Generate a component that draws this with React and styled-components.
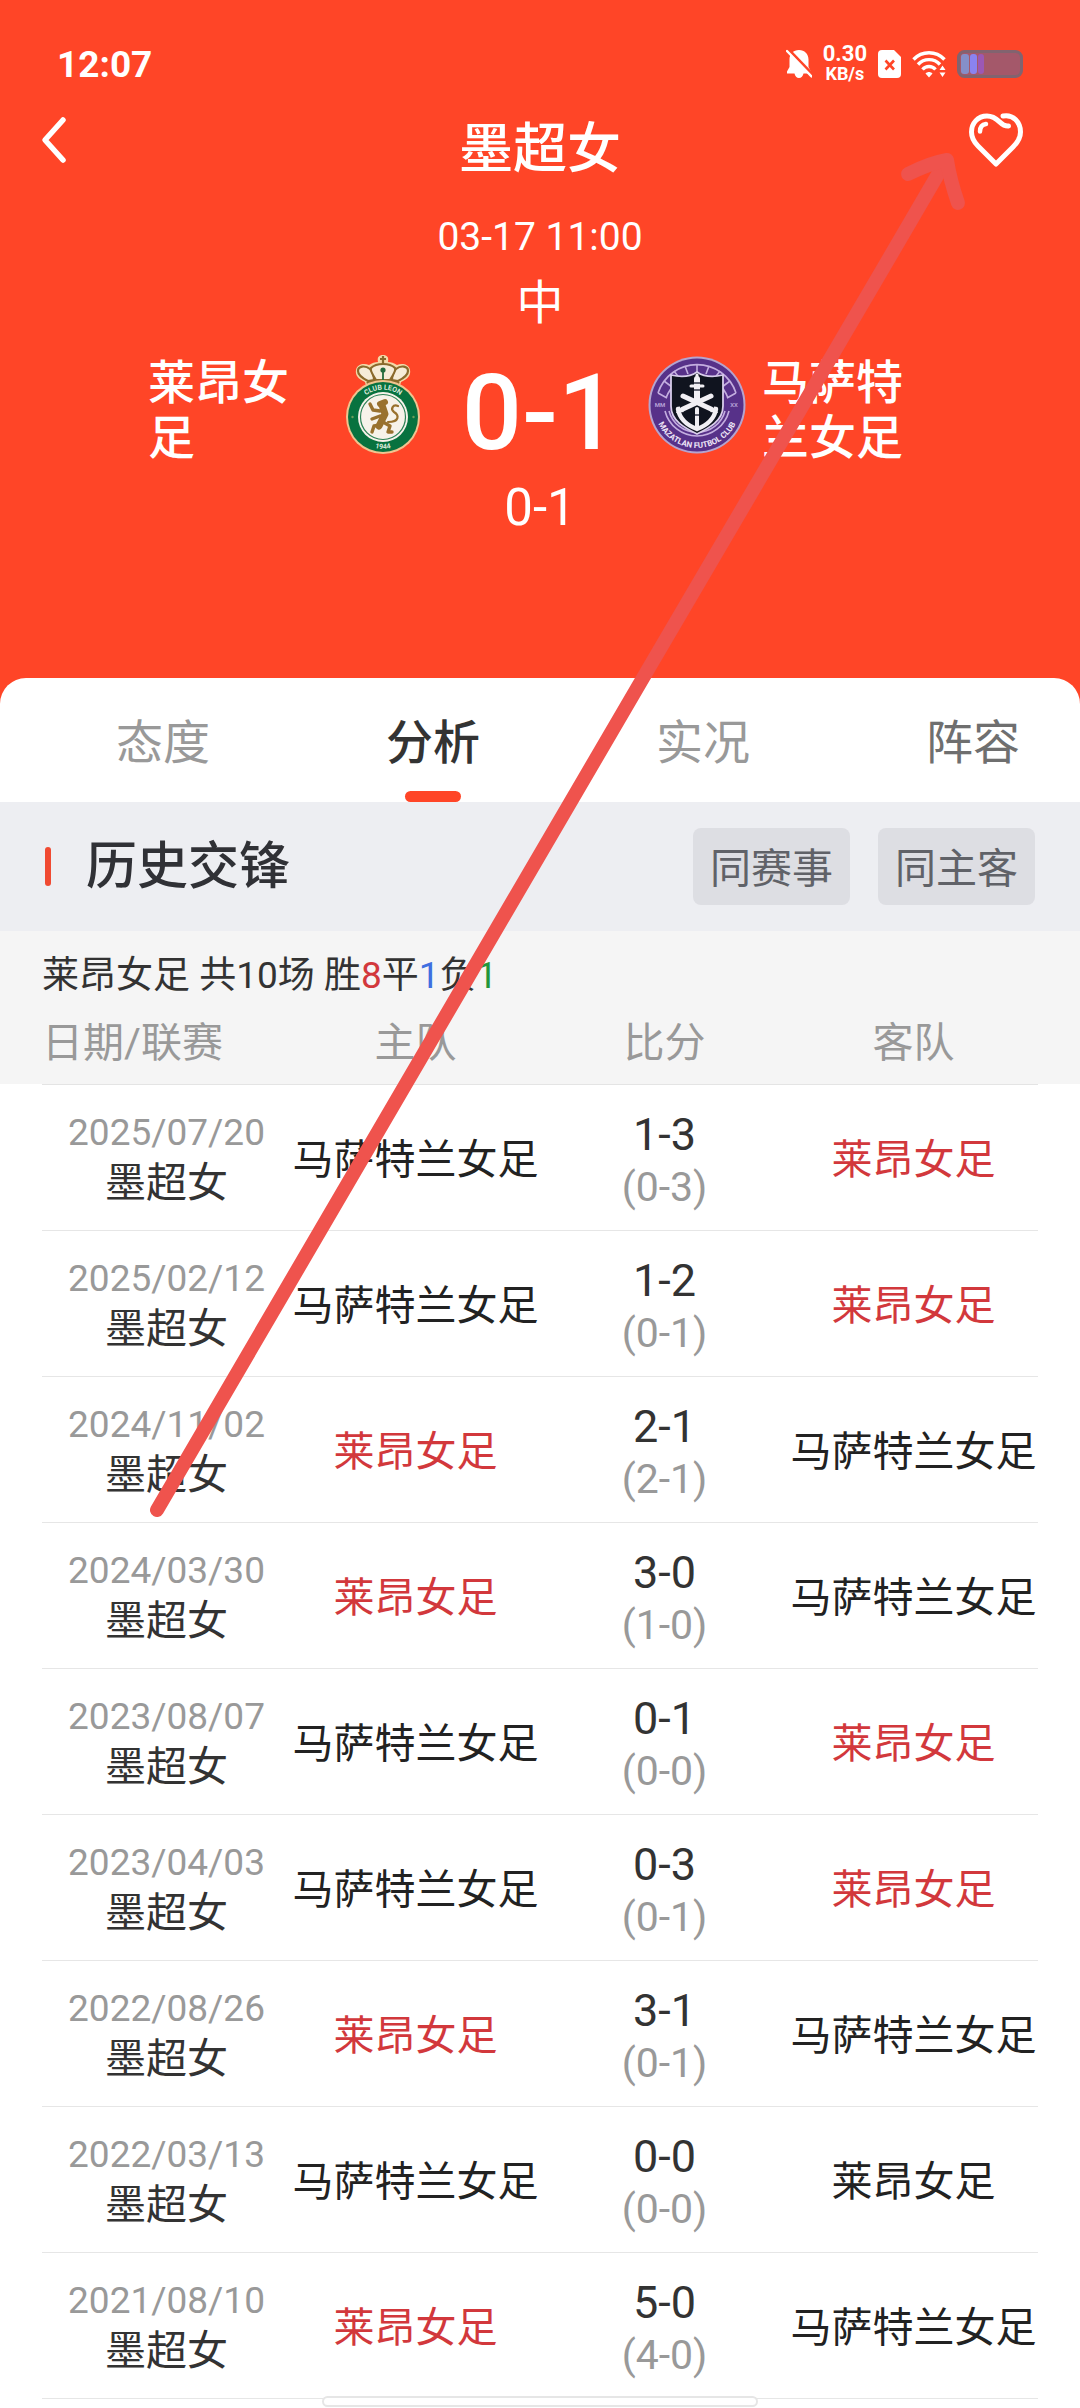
import React, { useState } from "react";
import styled, { createGlobalStyle } from "styled-components";

const GlobalStyle = createGlobalStyle`
  * { box-sizing: border-box; }
  body {
    margin: 0;
    background: #fff;
    font-family: Roboto, "Noto Sans CJK SC", sans-serif;
    color: #222;
  }
  button { font: inherit; border: 0; background: none; padding: 0; cursor: pointer; }
`;

const Page = styled.div`
  position: relative;
  min-height: 100vh;
  background: #fff;
  overflow: hidden;
`;

const Hero = styled.header`
  background: #ff4527;
  color: #fff;
  padding: 41px 57px 168px;
`;

const StatusBar = styled.div`
  display: flex;
  justify-content: space-between;
  align-items: center;
  height: 46px;
`;

const Clock = styled.time`
  font-size: 37px;
  font-weight: 700;
`;

const StatusIcons = styled.div`
  display: flex;
  align-items: center;
  gap: 11px;
`;

const Speed = styled.div`
  display: flex;
  flex-direction: column;
  align-items: center;
  font-weight: 700;
  font-size: 22px;
  line-height: 20px;
`;

const SpeedUnit = styled.span`
  font-size: 18px;
`;

const Nav = styled.nav`
  display: grid;
  grid-template-columns: 1fr auto 1fr;
  align-items: start;
  margin-top: 26px;
`;

const NavButton = styled.button`
  display: flex;
  align-items: center;
  height: 54px;
  color: #fff;
  justify-self: ${(p) => (p.$end ? "end" : "start")};
  margin-left: ${(p) => (p.$end ? "0" : "-16px")};
`;

const Title = styled.h1`
  margin: 0;
  font-size: 54px;
  font-weight: 500;
  line-height: 74px;
`;

const MatchInfo = styled.div`
  display: flex;
  flex-direction: column;
  align-items: center;
  gap: 10px;
  margin-top: 22px;
  font-size: 39px;
  line-height: 56px;
`;

const Venue = styled.span`
  font-size: 47px;
`;

const Versus = styled.div`
  display: grid;
  grid-template-columns: 1fr 98px 216px 98px 1fr;
  align-items: start;
  margin-top: 24px;
`;

const TeamName = styled.div`
  width: 186px;
  padding-left: ${(p) => (p.$away ? "16px" : "0")};
  justify-self: ${(p) => (p.$away ? "start" : "end")};
  font-size: 47px;
  font-weight: 500;
  line-height: 55px;
`;

const FinalScore = styled.div`
  text-align: center;
  font-size: 106px;
  font-weight: 500;
  line-height: 116px;
`;

const HalfScore = styled.div`
  margin-top: 9px;
  text-align: center;
  font-size: 51px;
  line-height: 56px;
`;

const Panel = styled.main`
  position: relative;
  margin-top: -26px;
  border-radius: 26px 26px 0 0;
  background: #fff;
  overflow: hidden;
`;

const Tabs = styled.div`
  display: flex;
  height: 124px;
  padding-left: 28px;
`;

const Tab = styled.button`
  position: relative;
  flex: 0 0 25vw;
  padding-bottom: 4px;
  font-size: 47px;
  font-weight: ${(p) => (p.$active ? 500 : 400)};
  color: ${(p) => (p.$active ? "#333" : p.$strong ? "#6f6f6f" : "#999")};

  &::after {
    content: "";
    position: absolute;
    left: 50%;
    bottom: 0;
    width: 56px;
    height: 11px;
    margin-left: -28px;
    border-radius: 6px;
    background: ${(p) => (p.$active ? "#ff4527" : "transparent")};
  }
`;

const SectionHead = styled.div`
  display: flex;
  align-items: center;
  height: 129px;
  padding: 0 45px;
  background: #edeef2;
`;

const SectionTitle = styled.h2`
  display: flex;
  align-items: center;
  gap: 35px;
  margin: 0 auto 0 0;
  font-size: 51px;
  font-weight: 500;
  line-height: 77px;
  color: #303136;

  &::before {
    content: "";
    width: 6px;
    height: 39px;
    border-radius: 3px;
    background: #f04a32;
  }
`;

const Filters = styled.div`
  display: flex;
  gap: 28px;
`;

const FilterButton = styled.button`
  width: 157px;
  height: 77px;
  padding-bottom: 3px;
  border-radius: 8px;
  background: ${(p) => (p.$on ? "#cfd1d8" : "#dddee3")};
  color: #606268;
  font-size: 41px;
`;

const Summary = styled.p`
  margin: 0;
  padding: 20px 42px 0;
  background: #f5f5f5;
  color: #333;
  font-size: 37px;
  line-height: 50px;
`;

const Count = styled.span`
  color: ${(p) => p.$color};
`;

const Records = styled.div`
  padding: 0 42px 9px;
  background: linear-gradient(#f5f5f5 83px, #fff 83px);
`;

const Table = styled.table`
  width: 100%;
  table-layout: fixed;
  border-collapse: separate;
  border-spacing: 0;
  font-size: 41px;
  white-space: nowrap;
`;

const HeadCell = styled.th`
  height: 84px;
  padding: 0 0 8px;
  border-bottom: 1px solid #e4e4e4;
  font-weight: 400;
  color: #999;
  text-align: ${(p) => (p.$left ? "left" : "center")};
`;

const Cell = styled.td`
  height: 146px;
  padding: ${(p) => (p.$score ? "6px 0 0" : p.$team ? "0 0 4px" : "0")};
  border-bottom: 1px solid #e6e6e6;
  text-align: center;
  color: ${(p) => (p.$mark ? "#d2383c" : "#222")};
`;

const PlayedOn = styled.div`
  font-size: 37px;
  line-height: 51px;
  color: #999;
`;

const League = styled.div`
  line-height: 51px;
  color: #333;
`;

const Full = styled.div`
  font-size: 45px;
  line-height: 53px;
  color: #333;
`;

const Half = styled.div`
  line-height: 53px;
  color: #999;
`;

const Pointer = styled.svg`
  position: absolute;
  top: 0;
  left: 0;
  width: 100%;
  pointer-events: none;
`;

const HomeBar = styled.div`
  position: absolute;
  left: 0;
  right: 0;
  bottom: 1px;
  width: 436px;
  height: 11px;
  margin: 0 auto;
  border: 2px solid #e6e6e6;
  border-radius: 6px;
  background: #fff;
`;

const BellOff = () => (
  <svg width="26" height="30" viewBox="0 0 26 30" aria-hidden="true">
    <path
      fill="#fff"
      d="M13 1c5.600 0 9.500 4 9.500 9.500v7.500l2.500 4.500v2h-7.500c-.5 2.600-2.200 4.500-4.500 4.500s-4-1.900-4.500-4.500H1v-2l2.500-4.500v-7.500C3.500 5 7.400 1 13 1z"
    />
    <path d="M2 0 L26 25" stroke="#ff4527" strokeWidth="3" />
    <path d="M1 2 L25.500 27.500" stroke="#fff" strokeWidth="2.400" strokeLinecap="round" />
  </svg>
);

const SimOff = () => (
  <svg width="23" height="28" viewBox="0 0 23 28" aria-hidden="true">
    <path fill="#fff" d="M4 0h12l7 7v17a4 4 0 0 1-4 4H4a4 4 0 0 1-4-4V4a4 4 0 0 1 4-4z" />
    <path d="M7.500 10.500l8.500 9M16 10.500l-8.500 9" stroke="#ff4527" strokeWidth="2.600" />
  </svg>
);

const Wifi = () => (
  <svg width="34" height="28" viewBox="0 0 34 28" aria-hidden="true">
    <g fill="none" stroke="#fff" strokeWidth="3.400">
      <path d="M1.500 9.500C10 .5 24 .5 32.500 9.500" />
      <path d="M6 14.500c6-6.500 16-6.500 22 0" />
      <path d="M10.500 19.500c3.500-4 9.500-4 13 0" />
    </g>
    <path fill="#fff" d="M13.500 23.500c2-2 5-2 7 0L17 27.500zM30.500 15.500l3 4.500h-6zM30.500 27l3-4.500h-6z" />
  </svg>
);

const Battery = () => (
  <svg width="66" height="28" viewBox="0 0 66 28" aria-hidden="true">
    <rect x="1.500" y="1.500" width="63" height="25" rx="6" fill="#a4586a" stroke="#82636f" strokeWidth="3" />
    <rect x="4" y="4" width="8" height="20" rx="3" fill="#858fc8" />
    <rect x="13" y="4" width="7" height="20" rx="3" fill="#8a83f0" />
    <rect x="21" y="4" width="6" height="20" rx="3" fill="#9c58b4" />
  </svg>
);

const BackIcon = () => (
  <svg width="28" height="48" viewBox="0 0 28 48" fill="none" stroke="#fff" strokeWidth="5.500" strokeLinecap="round" strokeLinejoin="round" aria-hidden="true">
    <path d="M22 4L4 24l18 20" />
  </svg>
);

const HeartIcon = () => (
  <svg width="54" height="54" viewBox="0 0 54 54" fill="none" stroke="#fff" strokeWidth="5" strokeLinecap="round" strokeLinejoin="round" aria-hidden="true">
    <path d="M34 3C44 1 51.500 9 51.500 19C51.500 26 48 30 44 34L27 51L9 33C4.500 28.500 2.500 25 2.500 19C2.500 10 9 3 18 3C30 3 31 14 39.500 13" />
    <path d="M11 18.500C11 14 13.500 11.500 17 11" strokeWidth="4.500" />
  </svg>
);

const LeonCrest = () => (
  <svg width="98" height="100" viewBox="0 0 98 100" role="img" aria-label="Club León">
    <defs>
      <path id="leon-top" d="M21.500 62a27.500 27.500 0 0 1 55 0" />
      <path id="leon-bottom" d="M17 62a32 32 0 0 0 64 0" />
    </defs>
    <path
      d="M33 34L31 27C24 24 21 20 22 15c1-6 8-7 13-5 3-2 6-3 9-3-1-5 1-7 5-7s6 2 5 7c3 0 6 1 9 3 5-2 12-1 13 5 1 5-2 9-9 12l-2 7z"
      fill="#f3d9a8"
    />
    <g fill="#f6ecd8" stroke="#8a6a2c" strokeWidth="2.200">
      <path d="M34 26c-6-3-10-6-10-10 0-5 7-6 12-2 3 3 4 8 4 11z" />
      <path d="M64 26c6-3 10-6 10-10 0-5-7-6-12-2-3 3-4 8-4 11z" />
      <path d="M42 25c-4-6-6-10-5-12 3-3 8-4 12-4s9 1 12 4c1 2-1 6-5 12z" />
    </g>
    <path d="M33 29q16-6 32 0" stroke="#8a6a2c" strokeWidth="4" fill="none" />
    <path d="M49 1v8M46 4h6" stroke="#8a6a2c" strokeWidth="2.200" />
    <circle cx="49" cy="15" r="2.600" fill="#246b3c" />
    <path d="M49 16v10" stroke="#246b3c" strokeWidth="1.800" />
    <circle cx="49" cy="62" r="37" fill="#f0c48f" />
    <circle cx="49" cy="62" r="35" fill="#08723f" />
    <circle cx="49" cy="62" r="25" fill="#f7f2ea" />
    <circle cx="49" cy="62" r="22.500" fill="none" stroke="#2b8054" strokeWidth="1.200" />
    <g fill="none" stroke="#99712e" strokeLinecap="round" strokeLinejoin="round">
      <path d="M48 50l3 9-6 12" strokeWidth="7" />
      <path d="M46 49l5-2" strokeWidth="6" />
      <path d="M46 56l-7-1-3-6M46 61l-8 3M46 70l-6 1-2 6M49 67l7 4-2 6h4" strokeWidth="3.400" />
      <path d="M54 67c12 0 11-7 6-10-4-3-1-8 4-6" strokeWidth="2.200" />
    </g>
    <circle cx="18.500" cy="62" r="1.200" fill="#6f9c5b" />
    <circle cx="79.500" cy="62" r="1.200" fill="#6f9c5b" />
    <text fill="#dceadd" fontSize="7" fontWeight="700" textAnchor="middle">
      <textPath href="#leon-top" startOffset="50%">CLUB LEON</textPath>
    </text>
    <text fill="#dceadd" fontSize="7" fontWeight="700" textAnchor="middle">
      <textPath href="#leon-bottom" startOffset="50%">1944</textPath>
    </text>
  </svg>
);

const MazatlanCrest = () => (
  <svg width="98" height="100" viewBox="0 0 98 100" role="img" aria-label="Mazatlán Futbol Club">
    <defs>
      <path id="maz-ring" d="M6 50a43 43 0 0 0 86 0" />
    </defs>
    <circle cx="49" cy="50" r="48.500" fill="#b5a4cf" />
    <circle cx="49" cy="50" r="46.500" fill="#573189" />
    <g fill="none" stroke="#c3addf" strokeWidth="1.600">
      <path d="M10 38a41 41 0 0 1 78 0" />
      <path d="M18 43a33 33 0 0 1 62 0" />
      <path d="M10 38l9 5M16 26l8 6M26 16l6 8M37 11l3 8M49 9v8M61 11l-3 8M72 16l-6 8M82 26l-8 6M88 38l-9 5" />
      <path d="M17 56a33 33 0 0 0 64 0M21 56a29 29 0 0 0 56 0" />
    </g>
    <path d="M23 20q16 4 26-3 10 7 26 3v31c0 15-14 22-26 28-12-6-26-13-26-28z" fill="#10141f" stroke="#d8cdea" strokeWidth="1.800" />
    <g fill="none" stroke="#f1eff4" strokeLinecap="round">
      <path d="M49 24v20" strokeWidth="6" />
      <path d="M43 31h12M49 20v3" strokeWidth="3" />
      <path d="M35 41l28 13M63 41L35 54" strokeWidth="5" />
      <path d="M30 54c2 12 11 17 19 20 8-3 17-8 19-20" strokeWidth="4.500" />
      <path d="M49 54v18" strokeWidth="4" />
    </g>
    <path d="M46 28h6M46 35h6M47 60h4" stroke="#343746" strokeWidth="1.600" />
    <path d="M28 58l3-7 5 6zM70 58l-3-7-5 6z" fill="#f1eff4" />
    <g fill="#b5a0d6" fontSize="6" fontWeight="700" textAnchor="middle">
      <text x="12" y="52">MM</text>
      <text x="86" y="52">XX</text>
    </g>
    <text fill="#eee6f7" fontSize="8" fontWeight="700" textAnchor="middle">
      <textPath href="#maz-ring" startOffset="50%">MAZATLAN FUTBOL CLUB</textPath>
    </text>
  </svg>
);

const LEON = "莱昂女足";
const MAZ = "马萨特兰女足";

const matches = [
  { date: "2025/07/20", home: MAZ, full: "1-3", half: "(0-3)", away: LEON, mark: "away" },
  { date: "2025/02/12", home: MAZ, full: "1-2", half: "(0-1)", away: LEON, mark: "away" },
  { date: "2024/11/02", home: LEON, full: "2-1", half: "(2-1)", away: MAZ, mark: "home" },
  { date: "2024/03/30", home: LEON, full: "3-0", half: "(1-0)", away: MAZ, mark: "home" },
  { date: "2023/08/07", home: MAZ, full: "0-1", half: "(0-0)", away: LEON, mark: "away" },
  { date: "2023/04/03", home: MAZ, full: "0-3", half: "(0-1)", away: LEON, mark: "away" },
  { date: "2022/08/26", home: LEON, full: "3-1", half: "(0-1)", away: MAZ, mark: "home" },
  { date: "2022/03/13", home: MAZ, full: "0-0", half: "(0-0)", away: LEON, mark: null },
  { date: "2021/08/10", home: LEON, full: "5-0", half: "(4-0)", away: MAZ, mark: "home" },
];

const tabs = [
  { name: "态度" },
  { name: "分析" },
  { name: "实况" },
  { name: "阵容", strong: true },
];

export default function App() {
  const [active, setActive] = useState("分析");
  const [filters, setFilters] = useState([]);
  const toggle = (name) =>
    setFilters((on) => (on.includes(name) ? on.filter((n) => n !== name) : [...on, name]));

  return (
    <Page>
      <GlobalStyle />
      <Hero>
        <StatusBar>
          <Clock>12:07</Clock>
          <StatusIcons>
            <BellOff />
            <Speed>
              <span>0.30</span>
              <SpeedUnit>KB/s</SpeedUnit>
            </Speed>
            <SimOff />
            <Wifi />
            <Battery />
          </StatusIcons>
        </StatusBar>
        <Nav>
          <NavButton aria-label="返回">
            <BackIcon />
          </NavButton>
          <Title>墨超女</Title>
          <NavButton $end aria-label="收藏">
            <HeartIcon />
          </NavButton>
        </Nav>
        <MatchInfo>
          <time>03-17 11:00</time>
          <Venue>中</Venue>
        </MatchInfo>
        <Versus>
          <TeamName>{LEON}</TeamName>
          <LeonCrest />
          <FinalScore>0-1</FinalScore>
          <MazatlanCrest />
          <TeamName $away>{MAZ}</TeamName>
        </Versus>
        <HalfScore>0-1</HalfScore>
      </Hero>
      <Panel>
        <Tabs role="tablist">
          {tabs.map((t) => (
            <Tab
              key={t.name}
              role="tab"
              aria-selected={active === t.name}
              $active={active === t.name}
              $strong={t.strong}
              onClick={() => setActive(t.name)}
            >
              {t.name}
            </Tab>
          ))}
        </Tabs>
        <SectionHead>
          <SectionTitle>历史交锋</SectionTitle>
          <Filters>
            {["同赛事", "同主客"].map((name) => (
              <FilterButton
                key={name}
                aria-pressed={filters.includes(name)}
                $on={filters.includes(name)}
                onClick={() => toggle(name)}
              >
                {name}
              </FilterButton>
            ))}
          </Filters>
        </SectionHead>
        <Summary>
          莱昂女足 共10场 胜<Count $color="#d2383c">8</Count>平<Count $color="#3f6fe0">1</Count>负
          <Count $color="#23953a">1</Count>
        </Summary>
        <Records>
          <Table>
            <thead>
              <tr>
                <HeadCell $left>日期/联赛</HeadCell>
                <HeadCell>主队</HeadCell>
                <HeadCell>比分</HeadCell>
                <HeadCell>客队</HeadCell>
              </tr>
            </thead>
            <tbody>
              {matches.map((m) => (
                <tr key={m.date}>
                  <Cell>
                    <PlayedOn>{m.date}</PlayedOn>
                    <League>墨超女</League>
                  </Cell>
                  <Cell $team $mark={m.mark === "home"}>{m.home}</Cell>
                  <Cell $score>
                    <Full>{m.full}</Full>
                    <Half>{m.half}</Half>
                  </Cell>
                  <Cell $team $mark={m.mark === "away"}>{m.away}</Cell>
                </tr>
              ))}
            </tbody>
          </Table>
        </Records>
      </Panel>
      <HomeBar />
      <Pointer viewBox="0 0 1080 2408" aria-hidden="true">
        <g fill="none" stroke="#ef534d" strokeWidth="14" strokeLinecap="round" strokeLinejoin="round">
          <path d="M157 1510L643 678L888 260Q924 198 944 164" />
          <path d="M908 174Q930 163 947 160Q950 180 958 203" />
        </g>
      </Pointer>
    </Page>
  );
}
